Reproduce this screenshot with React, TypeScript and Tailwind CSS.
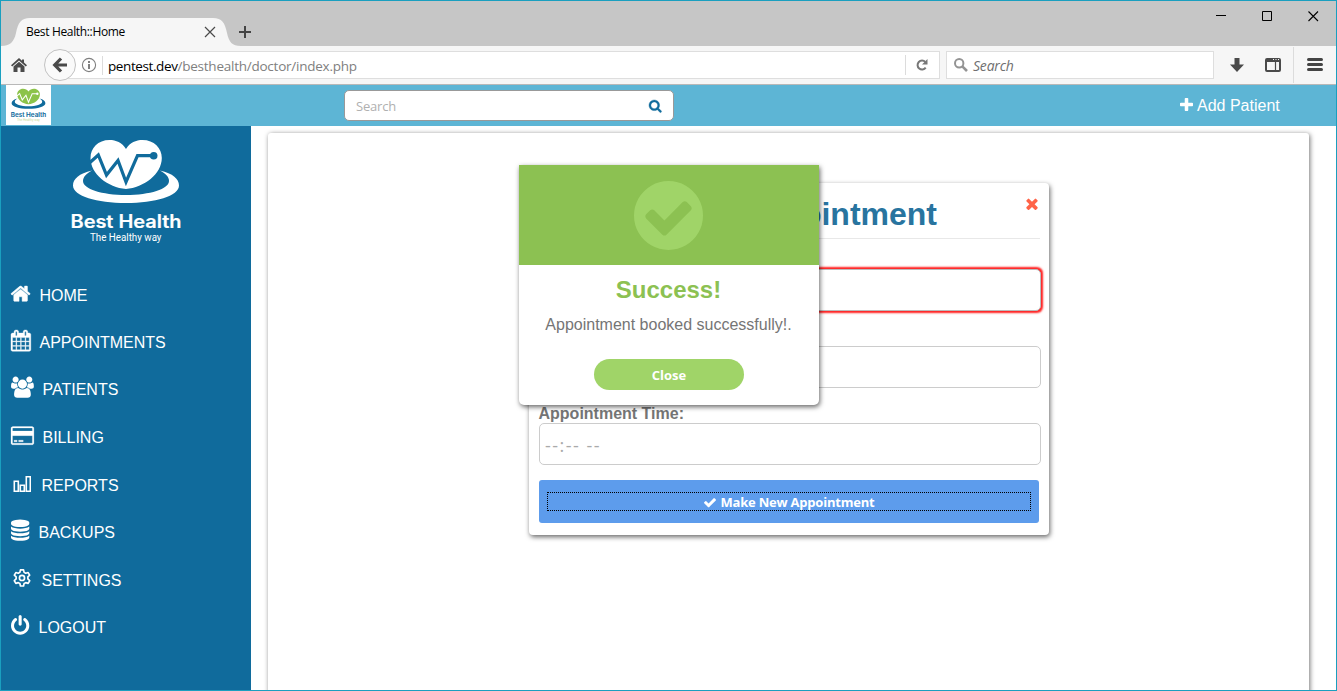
import React from "react";

const P = {
  home: "M1472 992v480q0 26-19 45t-45 19h-384v-384h-256v384h-384q-26 0-45-19t-19-45v-480q0-1 .5-3t.5-3l575-474 575 474q1 2 1 6zm223-69l-62 74q-8 9-21 11h-3q-13 0-21-7l-692-577-692 577q-12 8-24 7-13-2-21-11l-62-74q-8-10-7-23.5t11-21.5l719-599q32-26 76-26t76 26l244 204v-195q0-14 9-23t23-9h192q14 0 23 9t9 23v408l219 182q10 8 11 21.5t-7 23.5z",
  calendar: "M192 1664h288v-288h-288v288zm352 0h320v-288h-320v288zm-352-352h288v-320h-288v320zm352 0h320v-320h-320v320zm-352-384h288v-288h-288v288zm736 736h320v-288h-320v288zm-384-736h320v-288h-320v288zm768 736h288v-288h-288v288zm-384-352h320v-320h-320v320zm-352-864v-288q0-13-9.5-22.5t-22.5-9.5h-64q-13 0-22.5 9.5t-9.5 22.5v288q0 13 9.5 22.5t22.5 9.5h64q13 0 22.5-9.5t9.5-22.5zm736 864h288v-320h-288v320zm-384-384h320v-288h-320v288zm384 0h288v-288h-288v288zm32-480v-288q0-13-9.5-22.5t-22.5-9.5h-64q-13 0-22.5 9.5t-9.5 22.5v288q0 13 9.5 22.5t22.5 9.5h64q13 0 22.5-9.5t9.5-22.5zm384-64v1280q0 52-38 90t-90 38h-1408q-52 0-90-38t-38-90v-1280q0-52 38-90t90-38h128v-96q0-66 47-113t113-47h64q66 0 113 47t47 113v96h384v-96q0-66 47-113t113-47h64q66 0 113 47t47 113v96h128q52 0 90 38t38 90z",
  users: "M529 896q-162 5-265 128h-134q-82 0-138-40.5t-56-118.5q0-353 124-353 6 0 43.5 21t97.5 42.5 119 21.5q67 0 133-23-5 37-5 66 0 139 81 256zm1071 637q0 120-73 189.5t-194 69.5h-874q-121 0-194-69.5t-73-189.5q0-53 3.5-103.5t14-109 26.5-108.5 43-97.5 62-81 85.5-53.5 111.5-20q10 0 43 21.5t73 48 107 48 135 21.5 135-21.5 107-48 73-48 43-21.5q61 0 111.5 20t85.5 53.5 62 81 43 97.5 26.5 108.5 14 109 3.5 103.5zm-1024-1277q0 106-75 181t-181 75-181-75-75-181 75-181 181-75 181 75 75 181zm704 384q0 159-112.5 271.5t-271.5 112.5-271.5-112.5-112.5-271.5 112.5-271.5 271.5-112.5 271.5 112.5 112.5 271.5zm576 225q0 78-56 118.5t-138 40.5h-134q-103-123-265-128 81-117 81-256 0-29-5-66 66 23 133 23 59 0 119-21.5t97.5-42.5 43.5-21q124 0 124 353zm-128-609q0 106-75 181t-181 75-181-75-75-181 75-181 181-75 181 75 75 181z",
  card: "M1760 128q66 0 113 47t47 113v1216q0 66-47 113t-113 47h-1600q-66 0-113-47t-47-113v-1216q0-66 47-113t113-47h1600zm-1600 128q-13 0-22.500 9.500t-9.500 22.500v224h1664v-224q0-13-9.500-22.500t-22.500-9.500h-1600zm1600 1280q13 0 22.500-9.500t9.500-22.500v-608h-1664v608q0 13 9.500 22.500t22.500 9.500h1600zm-1504-128v-128h256v128h-256zm384 0v-128h384v128h-384z",
  database: "M896 768q237 0 443-43t325-127v170q0 69-103 128t-280 93.5-385 34.5-385-34.5-280-93.5-103-128v-170q119 84 325 127t443 43zm0 768q237 0 443-43t325-127v170q0 69-103 128t-280 93.5-385 34.5-385-34.5-280-93.5-103-128v-170q119 84 325 127t443 43zm0-384q237 0 443-43t325-127v170q0 69-103 128t-280 93.5-385 34.5-385-34.5-280-93.5-103-128v-170q119 84 325 127t443 43zm0-1152q208 0 385 34.5t280 93.5 103 128v128q0 69-103 128t-280 93.5-385 34.5-385-34.5-280-93.5-103-128v-128q0-69 103-128t280-93.5 385-34.5z",
  power: "M1664 896q0 156-61 298t-164 245-245 164-298 61-298-61-245-164-164-245-61-298q0-182 80.5-343t226.5-270q43-32 95.5-25t83.5 50q32 42 24.5 94.5t-49.5 84.5q-98 74-151.5 181t-53.5 228q0 104 40.5 198.5t109.5 163.5 163.5 109.5 198.5 40.5 198.5-40.5 163.5-109.5 109.5-163.5 40.5-198.5q0-121-53.5-228t-151.5-181q-42-32-49.5-84.5t24.5-94.5q31-43 84-50t95 25q146 109 226.5 270t80.5 343zm-640-768v640q0 52-38 90t-90 38-90-38-38-90v-640q0-52 38-90t90-38 90 38 38 90z",
  check: "M1671 566q0 40-28 68l-724 724-136 136q-28 28-68 28t-68-28l-136-136-362-362q-28-28-28-68t28-68l136-136q28-28 68-28t68 28l294 295 656-657q28-28 68-28t68 28l136 136q28 28 28 68z",
  times: "M1490 1322q0 40-28 68l-136 136q-28 28-68 28t-68-28l-294-294-294 294q-28 28-68 28t-68-28l-136-136q-28-28-28-68t28-68l294-294-294-294q-28-28-28-68t28-68l136-136q28-28 68-28t68 28l294 294 294-294q28-28 68-28t68 28l136 136q28 28 28 68t-28 68l-294 294 294 294q28 28 28 68z",
  plus: "M1600 736v192q0 40-28 68t-68 28h-416v416q0 40-28 68t-68 28h-192q-40 0-68-28t-28-68v-416h-416q-40 0-68-28t-28-68v-192q0-40 28-68t68-28h416v-416q0-40 28-68t68-28h192q40 0 68 28t28 68v416h416q40 0 68 28t28 68z",
  search: "M1216 832q0-185-131.5-316.5t-316.5-131.5-316.5 131.5-131.5 316.5 131.5 316.5 316.5 131.5 316.5-131.5 131.5-316.5zm512 832q0 52-38 90t-90 38q-54 0-90-38l-343-342q-179 124-399 124-143 0-273.5-55.5t-225-150-150-225-55.5-273.5 55.5-273.5 150-225 225-150 273.5-55.5 273.5 55.5 225 150 150 225 55.5 273.5q0 220-124 399l343 343q37 37 37 90z",
  checkCircle: "M1412 734q0-28-18-46l-91-90q-19-19-45-19t-45 19l-408 407-226-226q-19-19-45-19t-45 19l-91 90q-18 18-18 46 0 27 18 45l362 362q19 19 45 19 27 0 46-19l543-543q18-18 18-45zm252 162q0 209-103 385.5t-279.5 279.5-385.5 103-385.5-103-279.5-279.5-103-385.5 103-385.5 279.5-279.5 385.5-103 385.5 103 279.5 279.5 103 385.5z",
};

function Glyph({ d, box, className }: { d: string; box: string; className: string }) {
  return (
    <svg viewBox={box} className={"shrink-0 overflow-visible fill-current " + className}>
      <path d={d} />
    </svg>
  );
}

function Brand({ heart, ring, pulse, tag, className }: { heart: string; ring: string; pulse: string; tag: string; className: string }) {
  return (
    <svg viewBox="68 138 116 106" className={className}>
      <path
        fill={ring}
        d="M92 170.500C79 173.500 73 179 73 185.500C73 196 97 203 126 203C155 203 179 196 179 185.500C179 179 173 173.500 160 170.500C166 174 169 177 169 181C169 189 150 195 126 195C102 195 83 189 83 181C83 177 86 174 92 170.500Z"
      />
      <path
        fill={heart}
        d="M126 149C122 142.500 116 140 109.500 140C98 140 90.500 148 90.500 158C90.500 174 108 187.500 126 189C144 187.500 161.800 174 161.800 158C161.800 148 154 140 142.500 140C136 140 130 142.500 126 149Z"
      />
      <path d="M90 162.500L98.300 155L106.500 175L118 160.500L126 182L137.500 155.700H153" fill="none" stroke={pulse} strokeWidth="3.200" />
      <circle cx="153.700" cy="155.700" r="3.800" fill={pulse} />
      <text x="70.500" y="228" fontSize="18" fontWeight="600" fontFamily="Inter, sans-serif" fill={ring} stroke={ring} strokeWidth="0.200" textLength="111" lengthAdjust="spacingAndGlyphs">
        Best Health
      </text>
      <text x="90" y="241" fontSize="10" fontFamily="Roboto, sans-serif" fill={tag} textLength="71.500" lengthAdjust="spacingAndGlyphs">
        The Healthy way
      </text>
    </svg>
  );
}

const menu = [
  { label: "HOME", slot: "w-[29px]", h: "h-[47px]", icon: <Glyph d={P.home} box="90 250 1612 1290" className="w-[19.2px] h-[15.4px] -translate-y-[2px] stroke-current [stroke-width:40]" /> },
  { label: "APPOINTMENTS", slot: "w-[29px]", h: "h-[47px]", icon: <Glyph d={P.calendar} box="64 0 1664 1792" className="w-[19.8px] h-[21.3px] -translate-y-[2px] stroke-current [stroke-width:30]" /> },
  { label: "PATIENTS", slot: "w-[32px]", h: "h-[48px]", icon: <Glyph d={P.users} box="-64 0 1920 1792" className="w-[22.9px] h-[21.3px] -translate-y-[2.500px]" /> },
  { label: "BILLING", slot: "w-[32px]", h: "h-[48px]", icon: <Glyph d={P.card} box="0 128 1920 1536" className="w-[22.9px] h-[18.3px] -translate-y-[2.500px] stroke-current [stroke-width:20]" /> },
  {
    label: "REPORTS",
    slot: "w-[31px]",
    h: "h-[47px]",
    icon: (
      <svg viewBox="0 0 20 18" className="w-5 h-[18px] shrink-0 -translate-y-[2px]" fill="none" stroke="currentColor" strokeWidth="1.600">
        <path d="M3.300 6.300h4v9.900h-4zM9.300 10.300h4v5.900h-4zM15.300 1.800h4v14.400h-4z" />
      </svg>
    ),
  },
  { label: "BACKUPS", slot: "w-[28px]", h: "h-[48px]", icon: <Glyph d={P.database} box="128 0 1536 1792" className="w-[18.3px] h-[21.3px] -translate-y-[2.500px]" /> },
  {
    label: "SETTINGS",
    slot: "w-[31px]",
    h: "h-[47px]",
    icon: (
      <svg viewBox="0 0 24 24" className="w-[22px] h-[22px] shrink-0 -translate-y-[3.500px]" fill="none" stroke="currentColor" strokeWidth="1.800" strokeLinejoin="round">
        <path d="M10.300 3.700h3.400l.6 2.700 1.800 1 2.600-.8 1.700 2.900-2 1.900v2.200l2 1.900-1.700 2.900-2.600-.8-1.800 1-.6 2.700h-3.400l-.6-2.700-1.800-1-2.600.8-1.700-2.900 2-1.900v-2.200l-2-1.900 1.700-2.900 2.600.8 1.800-1z" />
        <circle cx="12" cy="12.500" r="2.800" />
      </svg>
    ),
  },
  { label: "LOGOUT", slot: "w-[28px]", h: "h-[47px]", icon: <Glyph d={P.power} box="128 0 1536 1664" className="w-[18.3px] h-[19.8px] -translate-y-[3px]" /> },
];

function TitleBar() {
  return (
    <div className="flex h-[45px] shrink-0 items-end justify-between bg-[#c6c6c6]">
      <div className="flex items-end">
        <div className="relative flex h-[28px] w-[232px] items-center">
          <svg viewBox="0 0 240 28" className="absolute left-0 top-0 h-[28px] w-[240px]">
            <path fill="#f6f6f6" d="M0 28C9 28 13 24 15 15C17 5 20 0 29 0H212C221 0 224 5 226 15C228 24 231 28 240 28Z" />
          </svg>
          <span className="relative ml-[25px] w-[178px] whitespace-nowrap font-['Open_Sans',sans-serif] text-[12px] tracking-[-0.34px] text-black">
            Best Health::Home
          </span>
          <svg viewBox="0 0 12 12" className="relative h-3 w-3" stroke="#4a4a4a" strokeWidth="1.200">
            <path d="M1 1L11 11M11 1L1 11" />
          </svg>
        </div>
        <svg viewBox="0 0 12 12" className="mb-2 ml-[6px] h-3 w-3" stroke="#444" strokeWidth="2">
          <path d="M6 0V12M0 6H12" />
        </svg>
      </div>
      <div className="flex h-[45px] w-[120px] items-start pt-[10px]">
        <svg viewBox="0 0 110 11" className="h-[11px] w-[110px]" fill="none" stroke="#000">
          <path d="M0 4.500h10M46.500 .5h9v9h-9z" />
          <path d="M92.500 .5l9.500 9.500M102 .5l-9.500 9.500" strokeWidth="1.100" />
        </svg>
      </div>
    </div>
  );
}

function Toolbar() {
  return (
    <div className="flex h-[39px] shrink-0 items-center border-b border-[#b8b8b8] bg-[#f6f6f6] font-['Open_Sans',sans-serif]">
      <svg viewBox="0 0 16 14" className="ml-[10px] h-[14px] w-4" fill="#4a4a4a">
        <path d="M8 0L0 7.200l1.200 1.200L8 2.500l6.800 5.900L16 7.200l-3-2.700V1.500h-2v1.200zM2.500 8.500V14h4V9.500h3V14h4V8.500L8 3.800z" />
      </svg>
      <div className="z-10 ml-[17px] flex h-8 w-8 items-center justify-center rounded-full border border-[#c2c2c2] bg-[#fafafa]">
        <svg viewBox="0 0 16 16" className="h-4 w-4" fill="none" stroke="#4a4a4a" strokeWidth="3.200">
          <path d="M9 1.500L2.700 8L9 14.500M3 8H15" />
        </svg>
      </div>
      <div className="-ml-4 flex h-[28px] w-[880px] items-center border border-[#dedede] bg-white">
        <svg viewBox="0 0 16 16" className="ml-[20px] h-4 w-4 shrink-0" fill="none" stroke="#808080" strokeWidth="1.100">
          <circle cx="8" cy="8" r="6.600" />
          <path d="M8 7v5M8 4v2" strokeWidth="2" />
        </svg>
        <div className="ml-[5px] h-[19px] w-px bg-[#dcdcdc]" />
        <span className="ml-[5px] mt-[2px] flex-1 whitespace-nowrap text-[13.5px] tracking-[-0.24px] text-[#808080]">
          <span className="tracking-[-0.4px] text-black">pentest.dev</span>/besthealth/doctor/index.php
        </span>
        <div className="h-[20px] w-px bg-[#dcdcdc]" />
        <svg viewBox="0 0 12 12" className="ml-[9.500px] mr-[11.500px] h-3 w-3" fill="none" stroke="#777" strokeWidth="2">
          <path d="M9.700 8.700A4.500 4.500 0 1 1 9.300 2.900" />
          <path d="M11.500 0v5.500H6z" fill="#777" stroke="none" />
        </svg>
      </div>
      <div className="ml-[6px] flex h-[28px] w-[268px] items-center border border-[#dedede] bg-white">
        <svg viewBox="0 0 14 14" className="ml-[7px] h-[14px] w-[14px]" fill="none" stroke="#949494" strokeWidth="2">
          <circle cx="5.200" cy="5.200" r="4.200" />
          <path d="M8.300 8.300L13 13" strokeWidth="2.600" />
        </svg>
        <span className="ml-[5px] mt-px text-[14px] italic tracking-[-0.2px] text-[#6f6f6f]">Search</span>
      </div>
      <svg viewBox="0 0 14 14" className="ml-4 h-[14px] w-[14px]" fill="#4a4a4a">
        <path d="M4.500 0h5v6.500H14L7 14 0 6.500h4.500z" />
      </svg>
      <svg viewBox="0 0 16 14" className="ml-[21px] h-[14px] w-4" fill="none" stroke="#4a4a4a" strokeWidth="2">
        <rect x="1" y="1" width="14" height="12" rx="1" />
        <path d="M1 3h14" />
        <path d="M10.500 4v9" strokeWidth="1.200" />
        <path d="M8 1.500h1M10.500 1.500h1M13 1.500h1" stroke="#f6f6f6" strokeWidth="1" />
      </svg>
      <div className="ml-[12px] h-[36px] w-px bg-[#dcdcdc]" />
      <svg viewBox="0 0 16 13" className="ml-[13px] h-[13px] w-4 -translate-y-[1px]" stroke="#444" strokeWidth="3" strokeLinecap="round">
        <path d="M1.500 1.500h13M1.500 6.500h13M1.500 11.500h13" />
      </svg>
    </div>
  );
}

function AppHeader() {
  return (
    <header className="flex h-[41px] shrink-0 items-center bg-[#5db5d5]">
      <div className="ml-[5px] flex h-[40px] w-[45px] items-center justify-center self-start bg-white">
        <Brand heart="#8cc34a" ring="#106b9c" pulse="#fff" tag="#c9d99a" className="h-[34px] w-[37px]" />
      </div>
      <div className="ml-[293px] flex h-[31px] w-[330px] items-center justify-between rounded-[5px] border border-[#999] bg-white pl-[11px] pr-[12px]">
        <span className="mt-[2px] font-['Open_Sans',sans-serif] text-[13px] tracking-[-0.2px] text-[#b0b0b0]">Search</span>
        <Glyph d={P.search} box="64 128 1664 1664" className="h-[12.500px] w-[12.500px] translate-y-[1px] text-[#106b9c] stroke-current [stroke-width:50]" />
      </div>
      <div className="ml-[506px] flex items-center text-[16px] text-white">
        <Glyph d={P.plus} box="192 128 1408 1408" className="mr-[4px] h-[13px] w-[13px] -translate-y-[1px]" />
        Add Patient
      </div>
    </header>
  );
}

function Sidebar() {
  return (
    <nav className="w-[250px] shrink-0 bg-[#106b9c] text-white">
      <Brand heart="#fff" ring="#fff" pulse="#106b9c" tag="#fff" className="ml-[67px] mt-[12px] h-[106px] w-[116px]" />
      <ul className="mt-[28px]">
        {menu.map((m) => (
          <li key={m.label} className={"flex items-center pl-[10px] text-[16px] " + m.h}>
            <span className={"flex shrink-0 " + m.slot}>{m.icon}</span>
            <span className="-ml-[0.500px]">{m.label}</span>
          </li>
        ))}
      </ul>
    </nav>
  );
}

function AppointmentForm() {
  return (
    <section className="ml-[261px] mt-[50px] h-[352px] w-[520px] rounded-[4px] bg-white px-[10px] shadow-[1px_2px_5px_0px_rgba(0,0,0,0.6)]">
      <div className="flex h-[56px] w-[501px] items-start justify-end border-b border-[#e8e8e8]">
        <h1 className="mt-[13px] text-[32px] font-bold leading-[36px] text-[#28749f]">Appointment</h1>
        <Glyph d={P.times} box="302 302 1188 1252" className="ml-[89px] mr-[2px] mt-[15px] h-[12px] w-[12px] text-[#ff6347]" />
      </div>
      <div className="mt-[30px] h-[42px] w-[502px] rounded-[5px] border border-[#bbb] bg-white shadow-[0_0_2px_1.200px_#ff2020]" />
      <div className="mt-[35px] h-[42px] w-[502px] rounded-[5px] border border-[#ccc] bg-white" />
      <label className="-ml-[0.500px] mt-[16px] block h-[19px] text-[16px] font-bold leading-[19px] text-[#757575]">Appointment Time:</label>
      <div className="flex h-[42px] w-[502px] items-center rounded-[5px] border border-[#ccc] bg-white pl-[5px] pt-[3px] font-['Open_Sans',sans-serif] text-[18px] font-medium tracking-[1.5px] text-[#aaa]">
        --:-- --
      </div>
      <button className="mt-[15px] flex h-[43px] w-[500px] items-center justify-center rounded-[3px] bg-[#5d9cec]">
        <span className="flex h-[19px] w-[484px] items-center justify-center whitespace-nowrap border border-dotted border-black pt-[2px] font-['Open_Sans',sans-serif] text-[13px] font-bold tracking-[-0.22px] text-white">
          <Glyph d={P.check} box="121 334 1550 1188" className="mr-[5px] h-[9.500px] w-[12px]" />
          Make New Appointment
        </span>
      </button>
    </section>
  );
}

function SuccessDialog() {
  return (
    <div className="absolute left-[518px] top-[164px] flex h-[240px] w-[300px] flex-col items-center overflow-visible rounded-b-[5px] bg-white shadow-[1px_2px_5px_0px_rgba(0,0,0,0.6)]">
      <div className="flex h-[100px] w-full items-center justify-center bg-[#8cc152]">
        <Glyph d={P.checkCircle} box="128 128 1536 1536" className="-ml-[1.500px] h-[69px] w-[69px] text-[#a0d468]" />
      </div>
      <h2 className="-ml-px mt-[11px] text-[24px] font-bold leading-[28px] text-[#8cc152]">Success!</h2>
      <p className="-ml-px mt-[11px] text-[16px] leading-[19px] text-[#757575]">Appointment booked successfully!.</p>
      <button className="mt-[25px] h-[31px] w-[150px] rounded-full bg-[#a0d468] pt-[2px] font-['Open_Sans',sans-serif] text-[13px] font-bold text-white">
        Close
      </button>
    </div>
  );
}

export default function App() {
  return (
    <div className="relative flex h-[691px] w-[1337px] flex-col overflow-hidden border border-[#1a9fbf] bg-white font-['Liberation_Sans',Arial,sans-serif]">
      <TitleBar />
      <Toolbar />
      <AppHeader />
      <div className="flex flex-1 overflow-hidden">
        <Sidebar />
        <main className="ml-[17px] mt-[7px] h-[600px] w-[1041px] rounded-[3px] bg-white shadow-[1px_1px_5px_0px_rgba(0,0,0,0.55)]">
          <AppointmentForm />
        </main>
      </div>
      <SuccessDialog />
    </div>
  );
}
